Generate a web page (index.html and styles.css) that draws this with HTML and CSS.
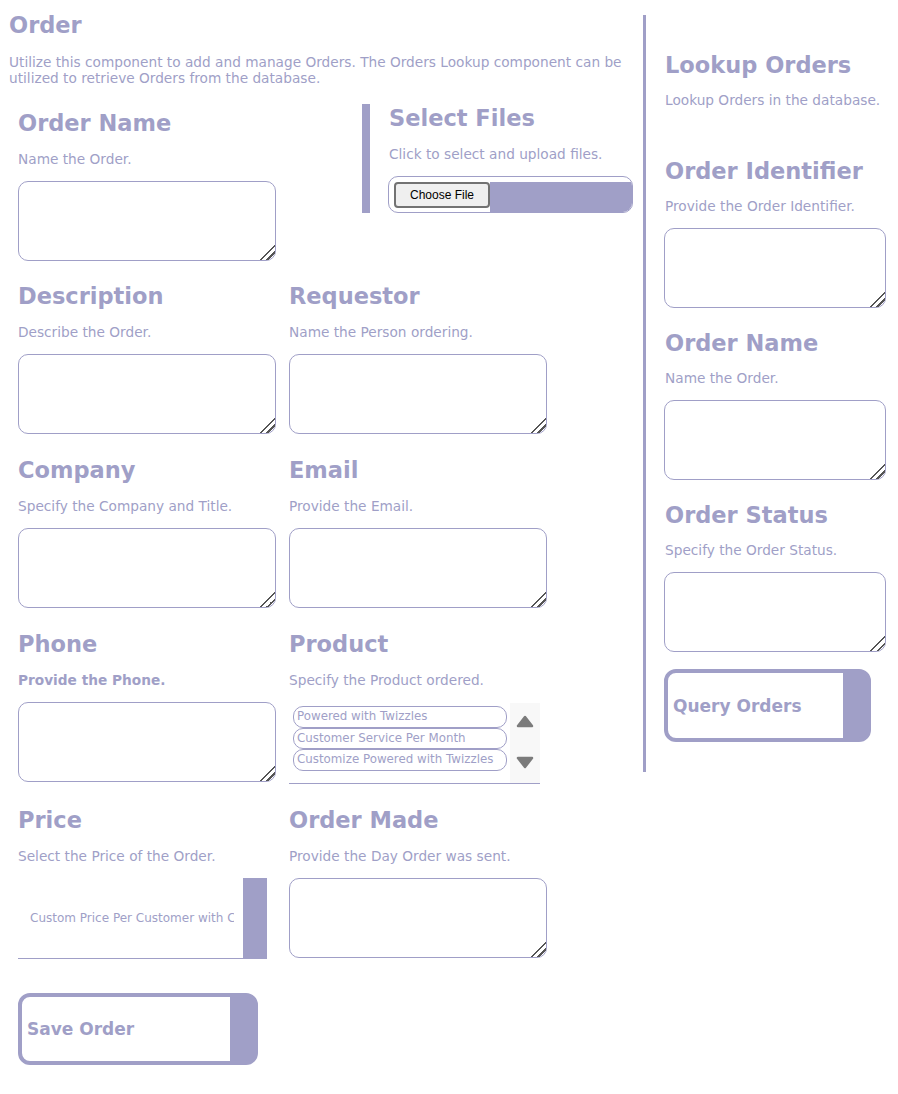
FILE: index.html
```html
<!DOCTYPE html>
<html lang="en">
<head>
<meta charset="utf-8">
<title>Order</title>
<link rel="stylesheet" href="styles.css">
</head>
<body>
<div class="page">
  <main class="editor">
    <h1 class="title">Order</h1>
    <p class="intro">Utilize this component to add and manage Orders. The Orders Lookup component can be utilized to retrieve Orders from the database.</p>

    <div class="top-row">
      <div class="field field-first">
        <h2 class="label">Order Name</h2>
        <p class="hint">Name the Order.</p>
        <textarea class="box"></textarea>
      </div>
      <div class="files">
        <h2 class="label">Select Files</h2>
        <p class="hint">Click to select and upload files.</p>
        <div class="file-box"><input type="file" class="file-input"></div>
      </div>
    </div>

    <div class="grid">
      <div class="field">
        <h2 class="label">Description</h2>
        <p class="hint">Describe the Order.</p>
        <textarea class="box"></textarea>
      </div>
      <div class="field">
        <h2 class="label">Requestor</h2>
        <p class="hint">Name the Person ordering.</p>
        <textarea class="box"></textarea>
      </div>
      <div class="field">
        <h2 class="label">Company</h2>
        <p class="hint">Specify the Company and Title.</p>
        <textarea class="box"></textarea>
      </div>
      <div class="field">
        <h2 class="label">Email</h2>
        <p class="hint">Provide the Email.</p>
        <textarea class="box"></textarea>
      </div>
      <div class="field">
        <h2 class="label">Phone</h2>
        <p class="hint hint-strong">Provide the Phone.</p>
        <textarea class="box"></textarea>
      </div>
      <div class="field">
        <h2 class="label">Product</h2>
        <p class="hint">Specify the Product ordered.</p>
        <div class="listbox" role="listbox">
          <div class="list-items">
            <div class="pill" role="option">Powered with Twizzles</div>
            <div class="pill" role="option">Customer Service Per Month</div>
            <div class="pill" role="option">Customize Powered with Twizzles</div>
          </div>
          <div class="scroller">
            <svg class="arrow" width="18" height="13" viewBox="0 0 18 13"><polygon points="9,2 16,11 2,11" fill="#7b7b7b" stroke="#7b7b7b" stroke-width="2.5" stroke-linejoin="round"/></svg>
            <svg class="arrow" width="18" height="13" viewBox="0 0 18 13"><polygon points="2,2 16,2 9,11" fill="#7b7b7b" stroke="#7b7b7b" stroke-width="2.5" stroke-linejoin="round"/></svg>
          </div>
        </div>
      </div>
      <div class="field">
        <h2 class="label">Price</h2>
        <p class="hint">Select the Price of the Order.</p>
        <select class="price">
          <option>Custom Price Per Customer with Chocolate</option>
        </select>
      </div>
      <div class="field">
        <h2 class="label">Order Made</h2>
        <p class="hint">Provide the Day Order was sent.</p>
        <textarea class="box"></textarea>
      </div>
    </div>

    <button class="action action-save" type="button">Save Order</button>
  </main>

  <aside class="lookup">
    <h2 class="label">Lookup Orders</h2>
    <p class="hint lookup-hint">Lookup Orders in the database.</p>

    <div class="side-field side-first">
      <h2 class="label">Order Identifier</h2>
      <p class="hint">Provide the Order Identifier.</p>
      <textarea class="box box-side"></textarea>
    </div>
    <div class="side-field">
      <h2 class="label">Order Name</h2>
      <p class="hint">Name the Order.</p>
      <textarea class="box box-side"></textarea>
    </div>
    <div class="side-field">
      <h2 class="label">Order Status</h2>
      <p class="hint">Specify the Order Status.</p>
      <textarea class="box box-side"></textarea>
    </div>

    <button class="action action-query" type="button">Query Orders</button>
  </aside>
</div>
</body>
</html>
```

FILE: styles.css
```css
* {
  box-sizing: border-box;
}

body {
  margin: 0;
  background: #ffffff;
  color: #a09fc7;
  font-family: "DejaVu Sans", Verdana, sans-serif;
}

.page {
  display: flex;
  align-items: flex-start;
}

/* ---------- left editor ---------- */

.editor {
  width: 633px;
  padding: 12px 0 0 9px;
}

.title {
  margin: 0;
  font-size: 22.5px;
  line-height: 26px;
  font-weight: bold;
}

.intro {
  margin: 16px 0 0;
  font-size: 13.7px;
  line-height: 16px;
}

.label {
  margin: 0;
  font-size: 22.5px;
  line-height: 26px;
  font-weight: bold;
}

.hint {
  margin: 15px 0 0;
  font-size: 13.7px;
  line-height: 16px;
}

.hint-strong {
  font-weight: bold;
}

.top-row {
  display: flex;
  align-items: flex-start;
  margin: 18px 0 0 9px;
}

.field {
  width: 258px;
}

.field .label {
  margin-top: 1px;
}

.field-first {
  padding-top: 5px;
}

.box {
  display: block;
  width: 258px;
  height: 80px;
  margin-top: 14px;
  border: 1px solid #a09fc7;
  border-radius: 10px;
  background: #ffffff;
  font: 13px "DejaVu Sans", sans-serif;
  outline: none;
}

.box::-webkit-resizer {
  background: linear-gradient(135deg,
    transparent 0 47%,
    #555555 47% 56%,
    transparent 56% 70%,
    #555555 70% 79%,
    transparent 79%);
}

.files {
  width: 271px;
  margin-left: auto;
  padding: 1px 0 0 19px;
  border-left: 8px solid #a09fc7;
}

.file-box {
  height: 37px;
  margin: 14px 0 0 -1px;
  padding: 5px 0 0 5px;
  border: 1px solid #a09fc7;
  border-radius: 10px;
  background: #ffffff;
  overflow: hidden;
}

.file-input {
  display: block;
  width: 100%;
  height: 100%;
  padding: 0;
  border: 0;
  color: transparent;
  font: 12px "Liberation Sans", Arial, sans-serif;
  background: linear-gradient(90deg, transparent 96px, #a09fc7 96px);
}

.file-input::file-selector-button {
  width: 96px;
  height: 26px;
  margin: 0;
  padding: 0;
  border: 2px solid #727272;
  border-radius: 4px;
  background: #efefef;
  color: #000000;
  font: 12px "Liberation Sans", Arial, sans-serif;
}

.grid {
  display: grid;
  grid-template-columns: 258px 258px;
  column-gap: 13px;
  row-gap: 22px;
  margin: 21px 0 0 9px;
}

/* product listbox */

.listbox {
  display: flex;
  width: 251px;
  height: 81px;
  margin-top: 15px;
  border-bottom: 1px solid #a09fc7;
}

.list-items {
  flex: 1;
  padding: 3px 3px 0 4px;
}

.pill {
  height: 21.5px;
  padding-left: 3px;
  border: 1px solid #a09fc7;
  border-radius: 10px;
  font-size: 11.85px;
  line-height: 19px;
  white-space: nowrap;
  overflow: hidden;
}

.scroller {
  width: 30px;
  background: #f8f8f8;
  display: flex;
  flex-direction: column;
  align-items: center;
  justify-content: space-between;
  padding: 12px 0 14px;
}

.arrow {
  display: block;
}

/* price select */

.price {
  display: block;
  width: 249px;
  height: 81px;
  margin-top: 14px;
  padding: 0 33px 0 12px;
  border: 0;
  border-bottom: 1px solid #a09fc7;
  border-radius: 0;
  appearance: none;
  -webkit-appearance: none;
  background: linear-gradient(90deg, #ffffff calc(100% - 24px), #a09fc7 calc(100% - 24px));
  color: #a09fc7;
  font: 12px "DejaVu Sans", sans-serif;
  outline: none;
}

/* buttons */

.action {
  display: block;
  border: 4px solid #a09fc7;
  border-radius: 12px;
  background: linear-gradient(90deg, #ffffff calc(100% - 24px), #a09fc7 calc(100% - 24px));
  color: #a09fc7;
  font: bold 17px "DejaVu Sans", sans-serif;
  text-align: left;
  padding: 0 0 0 5px;
  cursor: pointer;
}

.action-save {
  width: 240px;
  height: 72px;
  margin: 34px 0 0 9px;
}

.action-query {
  width: 207px;
  height: 73px;
  margin-top: 17px;
}

/* ---------- right lookup ---------- */

.lookup {
  width: 255px;
  margin: 15px 0 0 10px;
  padding: 37px 12px 30px 18px;
  border-left: 3px solid #a09fc7;
}

.lookup .label {
  padding-left: 1px;
}

.lookup-hint {
  margin-top: 14px;
  padding-left: 1px;
}

.side-field {
  margin-top: 22px;
}

.side-first {
  margin-top: 50px;
}

.side-field .hint {
  margin-top: 14px;
  padding-left: 1px;
}

.box-side {
  width: 222px;
  margin-top: 14px;
}
```
